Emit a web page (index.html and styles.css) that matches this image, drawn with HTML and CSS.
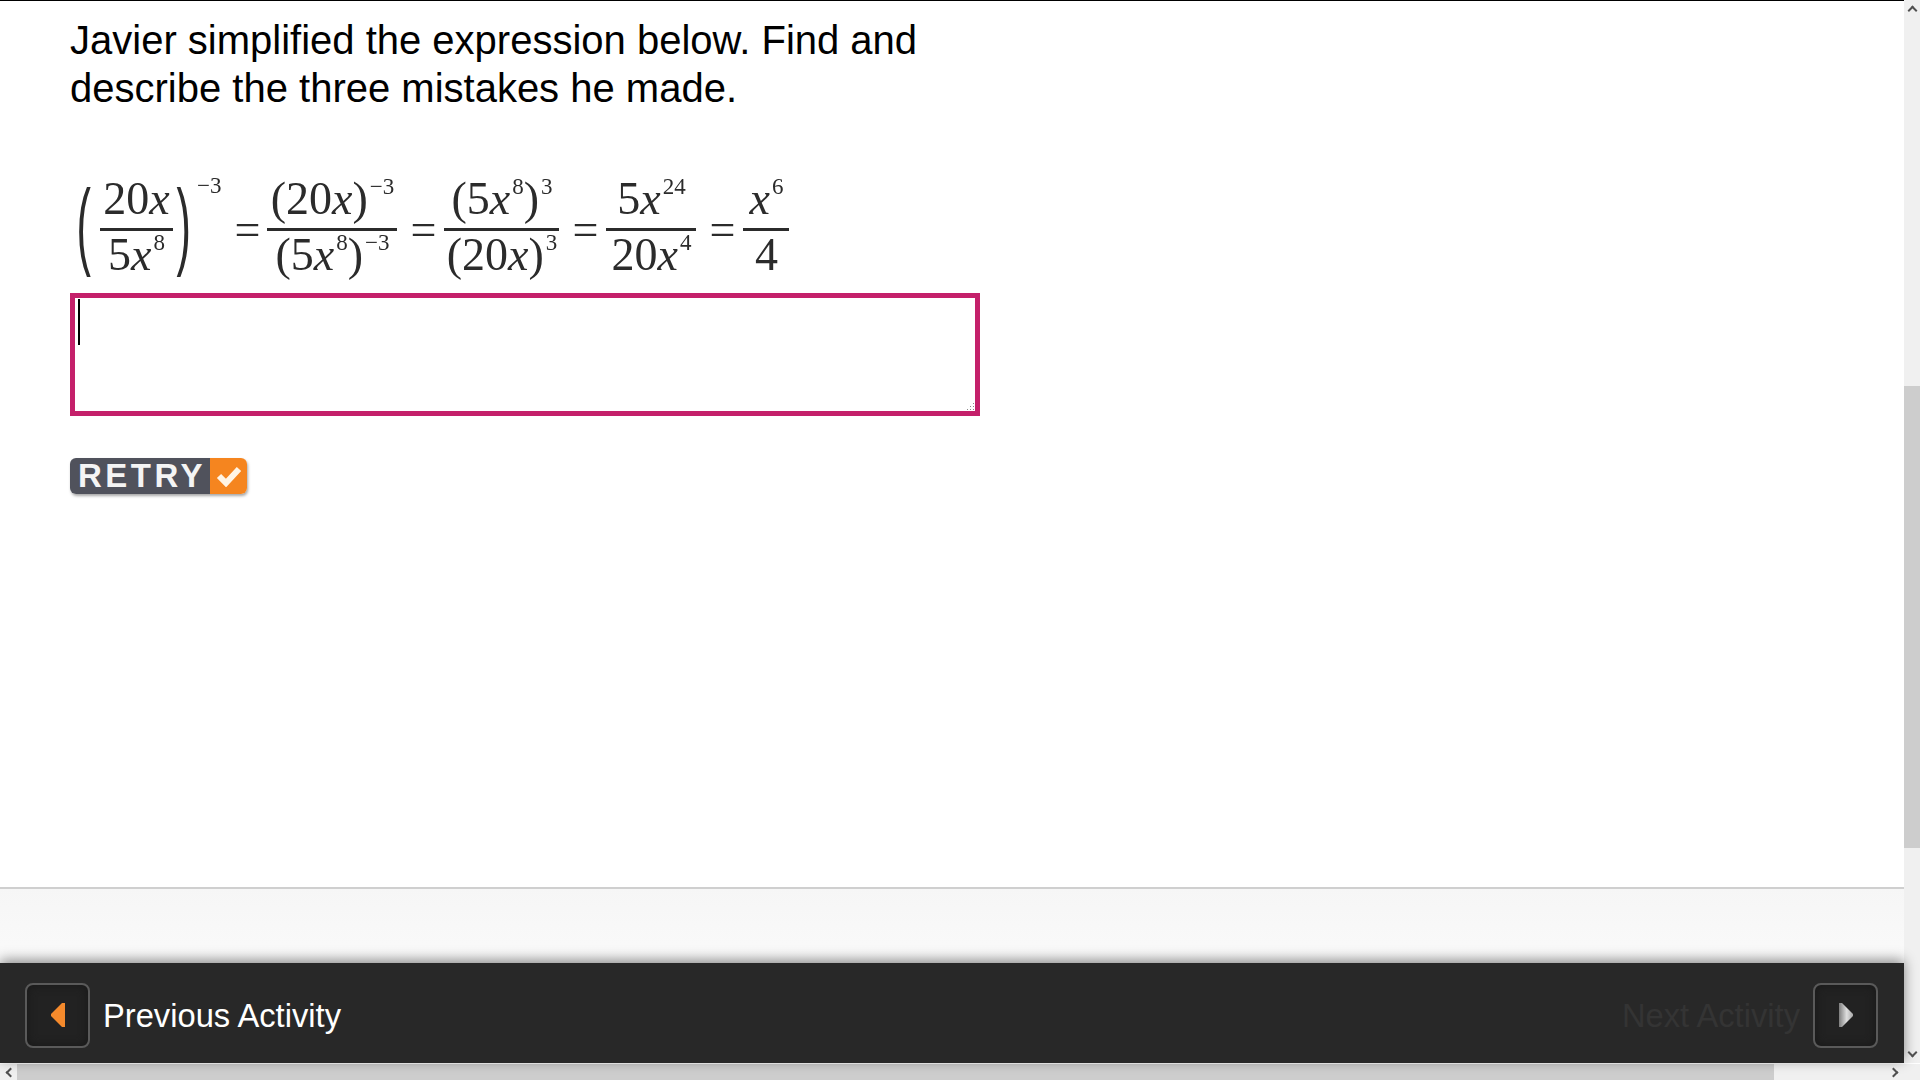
FILE: index.html
```html
<!DOCTYPE html>
<html lang="en">
<head>
    <meta charset="UTF-8">
    <title>Activity</title>
    <link rel="stylesheet" href="styles.css">
</head>
<body>
    <div class="viewport">
        <div class="content">
            <main class="activity">
                <p class="prompt">Javier simplified the expression below. Find and<br>describe the three mistakes he made.</p>

                <div class="math">
                    <span class="group">
                        <span class="paren paren-open">(</span>
                        <span class="frac frac-a">
                            <span class="num">20<i>x</i></span>
                            <span class="den">5<i>x</i><sup>8</sup></span>
                        </span>
                        <span class="paren paren-close">)</span>
                        <sup class="outer-exp">−3</sup>
                    </span>
                    <span class="eq eq-a">=</span>
                    <span class="frac frac-b">
                        <span class="num">(20<i>x</i>)<sup>−3</sup></span>
                        <span class="den">(5<i>x</i><sup>8</sup>)<sup>−3</sup></span>
                    </span>
                    <span class="eq">=</span>
                    <span class="frac frac-c">
                        <span class="num">(5<i>x</i><sup>8</sup>)<sup>3</sup></span>
                        <span class="den">(20<i>x</i>)<sup>3</sup></span>
                    </span>
                    <span class="eq">=</span>
                    <span class="frac frac-d">
                        <span class="num">5<i>x</i><sup>24</sup></span>
                        <span class="den">20<i>x</i><sup>4</sup></span>
                    </span>
                    <span class="eq">=</span>
                    <span class="frac frac-e">
                        <span class="num"><i>x</i><sup>6</sup></span>
                        <span class="den">4</span>
                    </span>
                </div>

                <div class="answer">
                    <span class="caret"></span>
                    <svg class="grip" width="10" height="10" viewBox="0 0 10 10">
                        <g fill="#8a8a8a">
                            <rect x="8" y="2" width="1" height="1"/>
                            <rect x="5" y="5" width="1" height="1"/>
                            <rect x="8" y="5" width="1" height="1"/>
                            <rect x="2" y="8" width="1" height="1"/>
                            <rect x="5" y="8" width="1" height="1"/>
                            <rect x="8" y="8" width="1" height="1"/>
                        </g>
                    </svg>
                </div>

                <div class="retry">
                    <span class="retry-label">RETRY</span>
                    <span class="retry-check">
                        <svg width="26" height="22" viewBox="0 0 26 22">
                            <path d="M3 11l7 7L23 4" fill="none" stroke="#fff4e4" stroke-width="6"/>
                        </svg>
                    </span>
                </div>
            </main>

            <div class="tray"></div>

            <nav class="nav">
                <div class="nav-side">
                    <span class="nav-btn">
                        <svg width="16" height="26" viewBox="0 0 16 26">
                            <path d="M15 1v24h-3L1 14v-2L12 1z" fill="#f58a2c"/>
                        </svg>
                    </span>
                    <span class="nav-label">Previous Activity</span>
                </div>
                <div class="nav-side">
                    <span class="nav-label disabled">Next Activity</span>
                    <span class="nav-btn">
                        <svg width="16" height="26" viewBox="0 0 16 26">
                            <defs>
                                <linearGradient id="nextFill" x1="0" x2="1" y1="0" y2="0">
                                    <stop offset="0" stop-color="#7d7d7d"/>
                                    <stop offset="0.55" stop-color="#dedede"/>
                                    <stop offset="1" stop-color="#a8a8a8"/>
                                </linearGradient>
                            </defs>
                            <path d="M1 1v24h3l11-11v-2L4 1z" fill="url(#nextFill)"/>
                        </svg>
                    </span>
                </div>
            </nav>
        </div>

        <div class="vscroll">
            <span class="arrow arrow-up"></span>
            <div class="vtrack"><div class="vthumb"></div></div>
            <span class="arrow arrow-down"></span>
        </div>
    </div>

    <div class="hscroll">
        <span class="arrow arrow-left"></span>
        <div class="htrack"><div class="hthumb"></div></div>
        <span class="arrow arrow-right"></span>
        <span class="corner"></span>
    </div>
</body>
</html>
```

FILE: styles.css
```css
html, body {
    margin: 0;
    height: 100%;
    overflow: hidden;
}

body {
    display: flex;
    flex-direction: column;
    width: 1920px;
    height: 1080px;
    background: #fff;
    font-family: "Liberation Sans", Arial, sans-serif;
}

.viewport {
    flex: 1;
    display: flex;
    min-height: 0;
}

.content {
    flex: 1;
    display: flex;
    flex-direction: column;
    min-width: 0;
}

.activity {
    flex: 1;
    border-top: 1px solid #000;
    padding: 15px 0 0 70px;
}

.prompt {
    margin: 0;
    font-size: 40px;
    line-height: 48px;
    color: #000;
}

/* equation */
.math {
    display: flex;
    align-items: flex-start;
    height: 117px;
    margin-top: 58px;
    color: #2b2b2b;
    font-family: "Liberation Serif", "Times New Roman", serif;
    font-size: 46px;
    filter: blur(0.5px);
}

.math sup {
    margin-left: 2px;
    font-size: 23px;
    line-height: 0;
    vertical-align: 20px;
}

.group {
    display: flex;
    align-items: flex-start;
}

.paren {
    width: 24px;
    font-family: "Liberation Sans", Arial, sans-serif;
    font-size: 96px;
    line-height: 108px;
    text-align: center;
    transform: scaleX(0.45);
}

.paren-open {
    margin-right: 6px;
}

.paren-close {
    margin-left: -3px;
}

.math .outer-exp {
    margin: 4px 0 0 3px;
    line-height: 24px;
    vertical-align: baseline;
}

.frac {
    display: flex;
    flex-direction: column;
    align-items: center;
}

.num {
    align-self: stretch;
    height: 58px;
    line-height: 58px;
    text-align: center;
    white-space: nowrap;
    border-bottom: 3px solid #2b2b2b;
}

.den {
    height: 48px;
    line-height: 48px;
    white-space: nowrap;
}

.frac-a { width: 73px; }
.frac-b { width: 130px; }
.frac-c { width: 115px; }
.frac-d { width: 90px; }
.frac-e { width: 46px; }

.eq {
    width: 24px;
    margin: 0 10px 0 13px;
    line-height: 120px;
    text-align: center;
}

.math .eq-a {
    margin: 0 9px 0 13px;
}

/* answer box */
.answer {
    position: relative;
    box-sizing: border-box;
    width: 910px;
    height: 123px;
    margin-top: 6px;
    border: 5px solid #c4206a;
}

.caret {
    position: absolute;
    left: 3px;
    top: 1px;
    width: 2px;
    height: 46px;
    background: #000;
}

.grip {
    position: absolute;
    right: 0;
    bottom: 0;
}

/* retry button */
.retry {
    display: inline-flex;
    height: 36px;
    margin-top: 42px;
    border-radius: 6px;
    overflow: hidden;
    box-shadow: 1px 2px 3px rgba(0, 0, 0, 0.35);
}

.retry-label {
    box-sizing: border-box;
    display: flex;
    align-items: center;
    justify-content: center;
    width: 140px;
    padding-left: 4px;
    background: #50525c;
    color: #f4f4f4;
    font-size: 33px;
    font-weight: bold;
    letter-spacing: 3.5px;
}

.retry-check {
    display: flex;
    align-items: center;
    justify-content: center;
    width: 37px;
    background: #f5851f;
}

/* footer */
.tray {
    box-sizing: border-box;
    height: 76px;
    border-top: 2px solid #cfcfcf;
    background: linear-gradient(#f6f6f6, #fafafa);
}

.nav {
    position: relative;
    box-sizing: border-box;
    display: flex;
    align-items: center;
    justify-content: space-between;
    height: 100px;
    padding: 4px 26px 0 25px;
    background: #282828;
    box-shadow: 0 -3px 12px rgba(0, 0, 0, 0.45);
}

.nav-side {
    display: flex;
    align-items: center;
    gap: 13px;
}

.nav-btn {
    box-sizing: border-box;
    display: flex;
    align-items: center;
    justify-content: center;
    width: 65px;
    height: 65px;
    border: 2px solid #5a5a5a;
    border-radius: 8px;
    background: #222;
    box-shadow: inset 0 0 10px #181818;
}

.nav-btn svg {
    filter: blur(0.6px);
}

.nav-label {
    padding-top: 2px;
    color: #fff;
    font-size: 32.7px;
}

.nav-label.disabled {
    color: #343434;
}

/* fake browser scrollbars */
.vscroll {
    display: flex;
    flex-direction: column;
    width: 16px;
    background: #f0f0f0;
}

.vtrack {
    flex: 1;
    padding-top: 369px;
}

.vthumb {
    height: 462px;
    background: #cdcdcd;
}

.hscroll {
    display: flex;
    height: 16px;
    margin-top: 1px;
    background: #f0f0f0;
}

.htrack {
    flex: 1;
}

.hthumb {
    width: 1757px;
    height: 100%;
    background: #cdcdcd;
}

.corner {
    width: 16px;
}

.arrow {
    position: relative;
    flex: none;
    width: 17px;
    height: 17px;
}

.arrow::after {
    content: "";
    position: absolute;
    left: 5px;
    top: 5px;
    width: 7px;
    height: 7px;
    border-top: 2px solid #505050;
    border-left: 2px solid #505050;
    box-sizing: border-box;
}

.vscroll .arrow {
    width: 16px;
}

.arrow-up::after { transform: translateY(2px) rotate(45deg); }
.arrow-down::after { transform: translateY(-2px) rotate(225deg); }
.arrow-left::after { transform: translateX(2px) rotate(-45deg); }
.arrow-right::after { transform: translateX(-2px) rotate(135deg); }
```
